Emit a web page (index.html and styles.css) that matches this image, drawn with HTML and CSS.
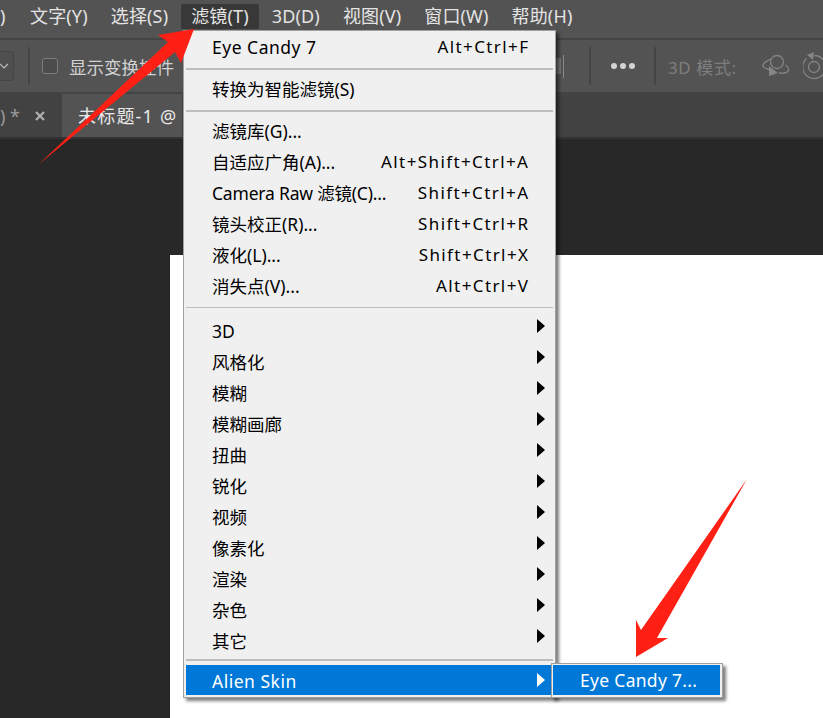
FILE: index.html
```html
<!doctype html>
<html>
    <head>
        <meta charset="utf-8" />
        <meta name="viewport" content="width=device-width, initial-scale=1" />
        <title>滤镜菜单</title>
        <link rel="stylesheet" href="styles.css">
    </head>
    <body>
        <div class="app">
            <nav class="menubar">
                <span class="menubar-cut">)</span>
                <span class="menubar-item">文字(Y)</span>
                <span class="menubar-item">选择(S)</span>
                <span class="menubar-item active">滤镜(T)</span>
                <span class="menubar-item">3D(D)</span>
                <span class="menubar-item">视图(V)</span>
                <span class="menubar-item">窗口(W)</span>
                <span class="menubar-item">帮助(H)</span>
            </nav>

            <div class="toolbar">
                <div class="select-stub">
                    <svg width="9" height="6" viewBox="0 0 9 6"><path d="M0 1l4 4 4-4" fill="none" stroke="#bdbdbd" stroke-width="1.2"/></svg>
                </div>
                <div class="tool-sep"></div>
                <span class="checkbox"></span>
                <span class="tool-label">显示变换控件</span>
                <div class="tool-right">
                    <div class="align-stub"><i></i><b></b></div>
                    <div class="tool-sep"></div>
                    <div class="dots"><i></i><i></i><i></i></div>
                    <div class="tool-sep"></div>
                    <span class="mode-label">3D 模式:</span>
                    <svg class="mode-icon" width="28" height="26" viewBox="0 0 28 26" fill="none" stroke="#858585" stroke-width="1.3">
                        <circle cx="15" cy="9" r="6.500"/>
                        <path d="M9 6C4 8 0 11 1 13.500c1 1.500 4 2.500 6 3M17 20c5 .5 9-.5 9.500-3 .5-1.500-1-3.500-3-5"/>
                        <path d="M7 13l9 7-9 3z" fill="#858585" stroke="none"/>
                    </svg>
                    <svg class="mode-icon" width="26" height="28" viewBox="0 0 26 28" fill="none" stroke="#858585" stroke-width="1.3">
                        <circle cx="11" cy="15" r="5.500"/>
                        <path d="M3.500 6.500a11.500 11.500 0 1 0 8-3"/>
                        <path d="M11 0l-7 3 6 5z" fill="#858585" stroke="none"/>
                    </svg>
                </div>
            </div>

            <div class="tabbar">
                <div class="tab">
                    <span>) *</span>
                    <svg class="tab-close" width="10" height="10" viewBox="0 0 10 10"><path d="M1 1l8 8M9 1l-8 8" stroke="#b4b4b4" stroke-width="2"/></svg>
                </div>
                <div class="tab current">未标题-1 @</div>
            </div>

            <main class="canvas">
                <div class="document"></div>
            </main>
        </div>

        <div class="menu">
            <div class="menu-row"><span class="wide">Eye Candy 7</span><span class="keys">Alt+Ctrl+F</span></div>
            <div class="menu-sep sep-a"></div>
            <div class="menu-row"><span>转换为智能滤镜(S)</span></div>
            <div class="menu-sep sep-b"></div>
            <div class="menu-row"><span>滤镜库(G)...</span></div>
            <div class="menu-row"><span>自适应广角(A)...</span><span class="keys">Alt+Shift+Ctrl+A</span></div>
            <div class="menu-row"><span class="narrow">Camera Raw 滤镜(C)...</span><span class="keys">Shift+Ctrl+A</span></div>
            <div class="menu-row"><span>镜头校正(R)...</span><span class="keys">Shift+Ctrl+R</span></div>
            <div class="menu-row"><span>液化(L)...</span><span class="keys">Shift+Ctrl+X</span></div>
            <div class="menu-row"><span>消失点(V)...</span><span class="keys">Alt+Ctrl+V</span></div>
            <div class="menu-sep sep-c"></div>
            <div class="menu-row sub"><span>3D</span></div>
            <div class="menu-row sub"><span>风格化</span></div>
            <div class="menu-row sub"><span>模糊</span></div>
            <div class="menu-row sub"><span>模糊画廊</span></div>
            <div class="menu-row sub"><span>扭曲</span></div>
            <div class="menu-row sub"><span>锐化</span></div>
            <div class="menu-row sub"><span>视频</span></div>
            <div class="menu-row sub"><span>像素化</span></div>
            <div class="menu-row sub"><span>渲染</span></div>
            <div class="menu-row sub"><span>杂色</span></div>
            <div class="menu-row sub"><span>其它</span></div>
            <div class="menu-sep sep-d"></div>
            <div class="menu-row sub selected"><span class="wide">Alien Skin</span></div>
        </div>

        <div class="submenu">
            <div class="submenu-row">Eye Candy 7...</div>
        </div>

        <svg class="arrows" width="823" height="718" viewBox="0 0 823 718">
            <polygon fill="#ff2015" points="38,165 168,42 158,35 194,29 181,63 175,52"/>
            <polygon fill="#ff2015" points="747,479 657,638 668,638 636,657 636,620 641,630"/>
        </svg>
    </body>
</html>
```

FILE: styles.css
```css
html {
    font-family: "Noto Sans", "Noto Sans CJK SC", sans-serif;
}

body {
    margin: 0;
    width: 823px;
    height: 718px;
    overflow: hidden;
    position: relative;
    background: #282828;
}

.app {
    display: flex;
    flex-direction: column;
    height: 718px;
}

/* top menu */
.menubar {
    height: 38px;
    flex: none;
    display: flex;
    align-items: flex-start;
    gap: 3px;
    padding-top: 4px;
    box-sizing: border-box;
    background: #535353;
    color: #e4e4e4;
    font-size: 18px;
    letter-spacing: 0.15px;
    line-height: 25px;
}

.menubar-cut {
    width: 17px;
}

.menubar-item {
    padding: 0 10px;
    white-space: nowrap;
}

.menubar-item.active {
    background: #383838;
    border-radius: 2px;
}

/* options bar */
.toolbar {
    height: 56px;
    flex: none;
    display: flex;
    align-items: center;
    box-sizing: border-box;
    border-top: 2px solid #444;
    border-bottom: 2px solid #444;
    background: #535353;
    color: #d2d2d2;
    font-size: 17.5px;
}

.select-stub {
    width: 14px;
    height: 30px;
    box-sizing: border-box;
    border: 1px solid #454545;
    border-left: 0;
    border-radius: 0 3px 3px 0;
    display: flex;
    align-items: center;
    background: #4f4f4f;
}

.tool-sep {
    width: 2px;
    height: 38px;
    flex: none;
    background: #444;
    margin-left: 14px;
}

.checkbox {
    width: 16px;
    height: 16px;
    box-sizing: border-box;
    border: 1px solid #7c7c7c;
    border-radius: 3px;
    background: #4c4c4c;
    margin-left: 12px;
}

.tool-label {
    margin-left: 11px;
    white-space: nowrap;
}

.tool-right {
    margin-left: auto;
    display: flex;
    align-items: center;
    width: 267px;
    flex: none;
}

.align-stub {
    width: 33px;
    flex: none;
    display: flex;
    align-items: center;
    gap: 2px;
}

.align-stub i {
    width: 5px;
    height: 16px;
    background: #777;
}

.align-stub b {
    width: 1px;
    height: 23px;
    background: #888;
}

.tool-right .tool-sep {
    margin-left: 0;
}

.dots {
    display: flex;
    flex: none;
    gap: 3px;
    margin: 0 19px 0 20px;
}

.dots i {
    width: 6px;
    height: 6px;
    border-radius: 50%;
    background: #d4d4d4;
}

.mode-label {
    flex: none;
    color: #7e7e7e;
    font-size: 17px;
    letter-spacing: 0.6px;
    margin-left: 12px;
    white-space: nowrap;
}

.mode-icon {
    margin-left: 25px;
    flex: none;
}

.mode-icon + .mode-icon {
    margin-left: 13px;
}

/* document tabs */
.tabbar {
    height: 43px;
    flex: none;
    display: flex;
    background: #424242;
    color: #d8d8d8;
    font-size: 18px;
    line-height: 42px;
}

.tab {
    width: 62px;
    display: flex;
    align-items: center;
    justify-content: flex-end;
    gap: 15px;
    padding-right: 17px;
    box-sizing: border-box;
    color: #9a9a9a;
    white-space: nowrap;
    overflow: hidden;
}

.tab-close {
    flex: none;
}

.tab.current {
    width: 120px;
    justify-content: flex-start;
    padding: 0 0 0 16px;
    letter-spacing: 1.2px;
    background: #535353;
    color: #e8e8e8;
}

/* work area */
.canvas {
    flex: 1;
    display: flex;
    padding: 116px 0 0 170px;
    border-top: 2px solid #333;
    box-sizing: border-box;
}

.document {
    flex: 1;
    background: #fff;
}

/* filter menu */
.menu,
.submenu {
    position: absolute;
    box-sizing: border-box;
    background: #f0f0f0;
    border: 1px solid #a0a0a0;
    box-shadow: 3px 3px 3px rgba(0, 0, 0, 0.5);
    color: #000;
    font-size: 17.5px;
}

.menu {
    left: 183px;
    top: 30px;
    width: 373px;
    height: 668px;
    padding: 1px 2px 0;
}

.menu-row {
    height: 31px;
    line-height: 30px;
    display: flex;
    justify-content: space-between;
    padding: 0 25px 0 26px;
    white-space: nowrap;
    position: relative;
}

.wide {
    letter-spacing: 0.5px;
}

.narrow {
    letter-spacing: -0.2px;
}

.keys {
    font-size: 17px;
    letter-spacing: 1.4px;
    margin-right: -1.4px;
}

.menu-sep {
    background: #bdbdbd;
}

.sep-a {
    height: 2px;
    margin: 5px 0 4px;
}

.sep-b {
    height: 2px;
    margin: 5px 0 4px;
}

.sep-c {
    height: 1px;
    margin: 5px 0 8px;
}

.sep-d {
    height: 2px;
    margin: 2px 0 4px;
}

.menu-row.sub::after {
    content: "";
    position: absolute;
    right: 8px;
    top: 3px;
    border-left: 8px solid #000;
    border-top: 7px solid transparent;
    border-bottom: 7px solid transparent;
}

.menu-row.selected {
    height: 30px;
    line-height: 33px;
    background: #0078d7;
    color: #fff;
}

.menu-row.selected::after {
    top: 8px;
    border-left-color: #fff;
}

.submenu {
    left: 551px;
    top: 663px;
    width: 172px;
    height: 35px;
    padding: 1px 2px 2px 1px;
}

.submenu-row {
    height: 30px;
    line-height: 31px;
    padding-left: 27px;
    letter-spacing: 0.3px;
    background: #0078d7;
    color: #fff;
}

.arrows {
    position: absolute;
    left: 0;
    top: 0;
    pointer-events: none;
}
```
